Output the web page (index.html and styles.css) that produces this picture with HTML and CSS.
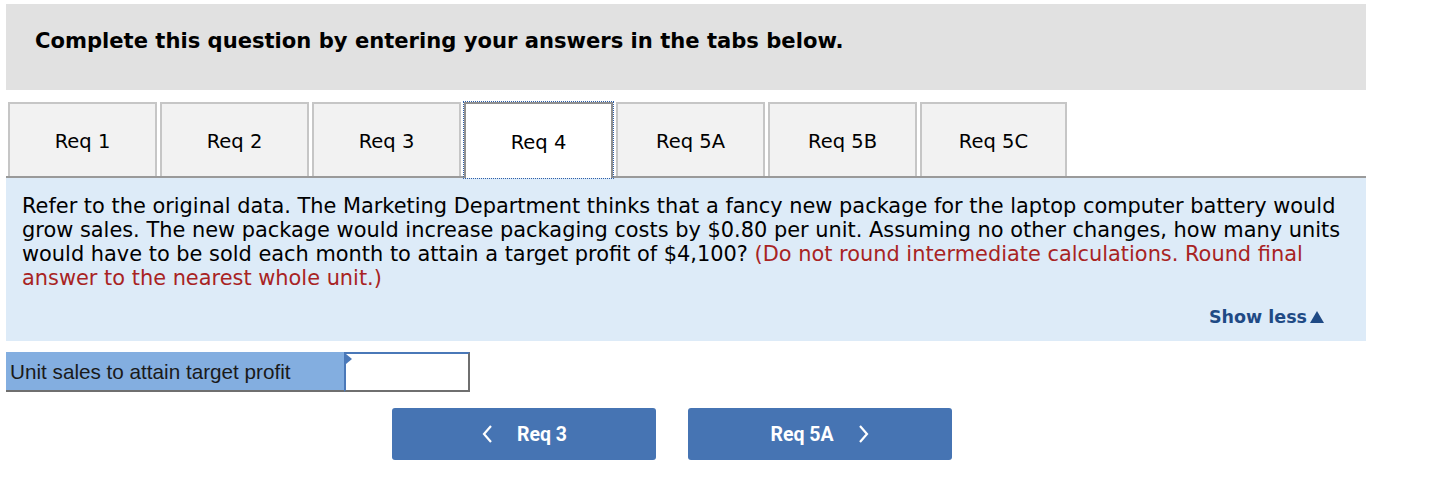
FILE: index.html
```html
<!DOCTYPE html>
<html>
<head>
<meta charset="utf-8">
<link rel="stylesheet" href="styles.css">
</head>
<body>
<div class="page">
  <div class="header">Complete this question by entering your answers in the tabs below.</div>
  <div class="tabs">
    <div class="tab">Req 1</div>
    <div class="tab">Req 2</div>
    <div class="tab">Req 3</div>
    <div class="tab active">Req 4</div>
    <div class="tab">Req 5A</div>
    <div class="tab">Req 5B</div>
    <div class="tab last">Req 5C</div>
  </div>
  <div class="panel">
    <p class="question">Refer to the original data. The Marketing Department thinks that a fancy new package for the laptop computer battery would grow sales. The new package would increase packaging costs by $0.80 per unit. Assuming no other changes, how many units would have to be sold each month to attain a target profit of $4,100? <span class="note">(Do not round intermediate calculations. Round final answer to the nearest whole unit.)</span></p>
    <div class="showless">Show less<span class="tri"></span></div>
  </div>
  <div class="answer">
    <div class="label">Unit sales to attain target profit</div>
    <div class="input"><span class="flag"></span></div>
  </div>
  <div class="nav">
    <div class="btn"><svg class="chev" width="12" height="20" viewBox="0 0 12 20"><path d="M10 2 L3 10 L10 18" fill="none" stroke="#fff" stroke-width="2.2"/></svg><span>Req 3</span></div>
    <div class="btn"><span>Req 5A</span><svg class="chev" width="12" height="20" viewBox="0 0 12 20"><path d="M2 2 L9 10 L2 18" fill="none" stroke="#fff" stroke-width="2.2"/></svg></div>
  </div>
</div>
</body>
</html>
```
FILE: styles.css
```css
* { box-sizing: border-box; }
html, body { margin: 0; padding: 0; background: #fff; }
.page {
  padding: 4px 0 0 6px;
  width: 1366px;
  font-family: "DejaVu Sans", Verdana, sans-serif;
  color: #000;
}
.header {
  background: #e1e1e1;
  height: 86px;
  padding: 24px 0 0 29px;
  font-weight: bold;
  font-size: 21.1px;
  line-height: 26px;
}
.tabs {
  display: flex;
  gap: 3px;
  margin: 12px 0 0 2px;
  height: 74px;
}
.tab {
  width: 149px;
  height: 74px;
  background: #f2f2f2;
  border: 2px solid #c6c6c6;
  border-bottom: none;
  display: flex;
  align-items: center;
  justify-content: center;
  font-size: 19.5px;
  padding-top: 2px;
}
.tab.last { width: 147px; }
.tab.active {
  background: #fff;
  border: 2px solid #8f8f8f;
  border-bottom: none;
  outline: 1px dotted #2f5fa8;
  outline-offset: 0px;
  height: 76px;
  position: relative;
  z-index: 2;
}
.panel {
  background: #ddebf8;
  border-top: 2px solid #9a9a9a;
  height: 165px;
  padding: 16px 10px 0 16px;
  position: relative;
}
.question {
  margin: 0;
  font-size: 20.9px;
  line-height: 24px;
}
.note { color: #a82323; }
.showless {
  position: absolute;
  right: 42px;
  top: 129px;
  font-weight: bold;
  font-size: 17.5px;
  color: #1f4a85;
  display: flex;
  align-items: center;
}
.tri {
  display: inline-block;
  width: 0; height: 0;
  border-left: 7px solid transparent;
  border-right: 7px solid transparent;
  border-bottom: 12px solid #1f4a85;
  margin-left: 3px;
}
.answer {
  display: flex;
  margin-top: 11px;
  height: 40px;
}
.label {
  width: 338px;
  background: #83aee0;
  border-bottom: 2px solid #6f6f6f;
  font-family: "Liberation Sans", Arial, sans-serif;
  font-size: 20.7px;
  color: #1a1a1a;
  padding: 8px 0 0 4px;
}
.input {
  width: 126px;
  background: #fff;
  border: 2px solid #4a78b8;
  border-right-color: #6f6f6f;
  border-bottom-color: #6f6f6f;
  position: relative;
}
.flag {
  position: absolute;
  left: 0; top: 0;
  width: 0; height: 0;
  border-top: 5px solid transparent;
  border-bottom: 5px solid transparent;
  border-left: 6px solid #4a78b8;
}
.nav {
  display: flex;
  gap: 32px;
  margin: 16px 0 0 386px;
}
.btn {
  width: 264px;
  height: 52px;
  background: #4674b3;
  border-radius: 3px;
  display: flex;
  align-items: center;
  justify-content: center;
  gap: 24px;
  color: #fff;
  font-family: Roboto, sans-serif;
  font-weight: bold;
  font-size: 19.5px;
}
```
